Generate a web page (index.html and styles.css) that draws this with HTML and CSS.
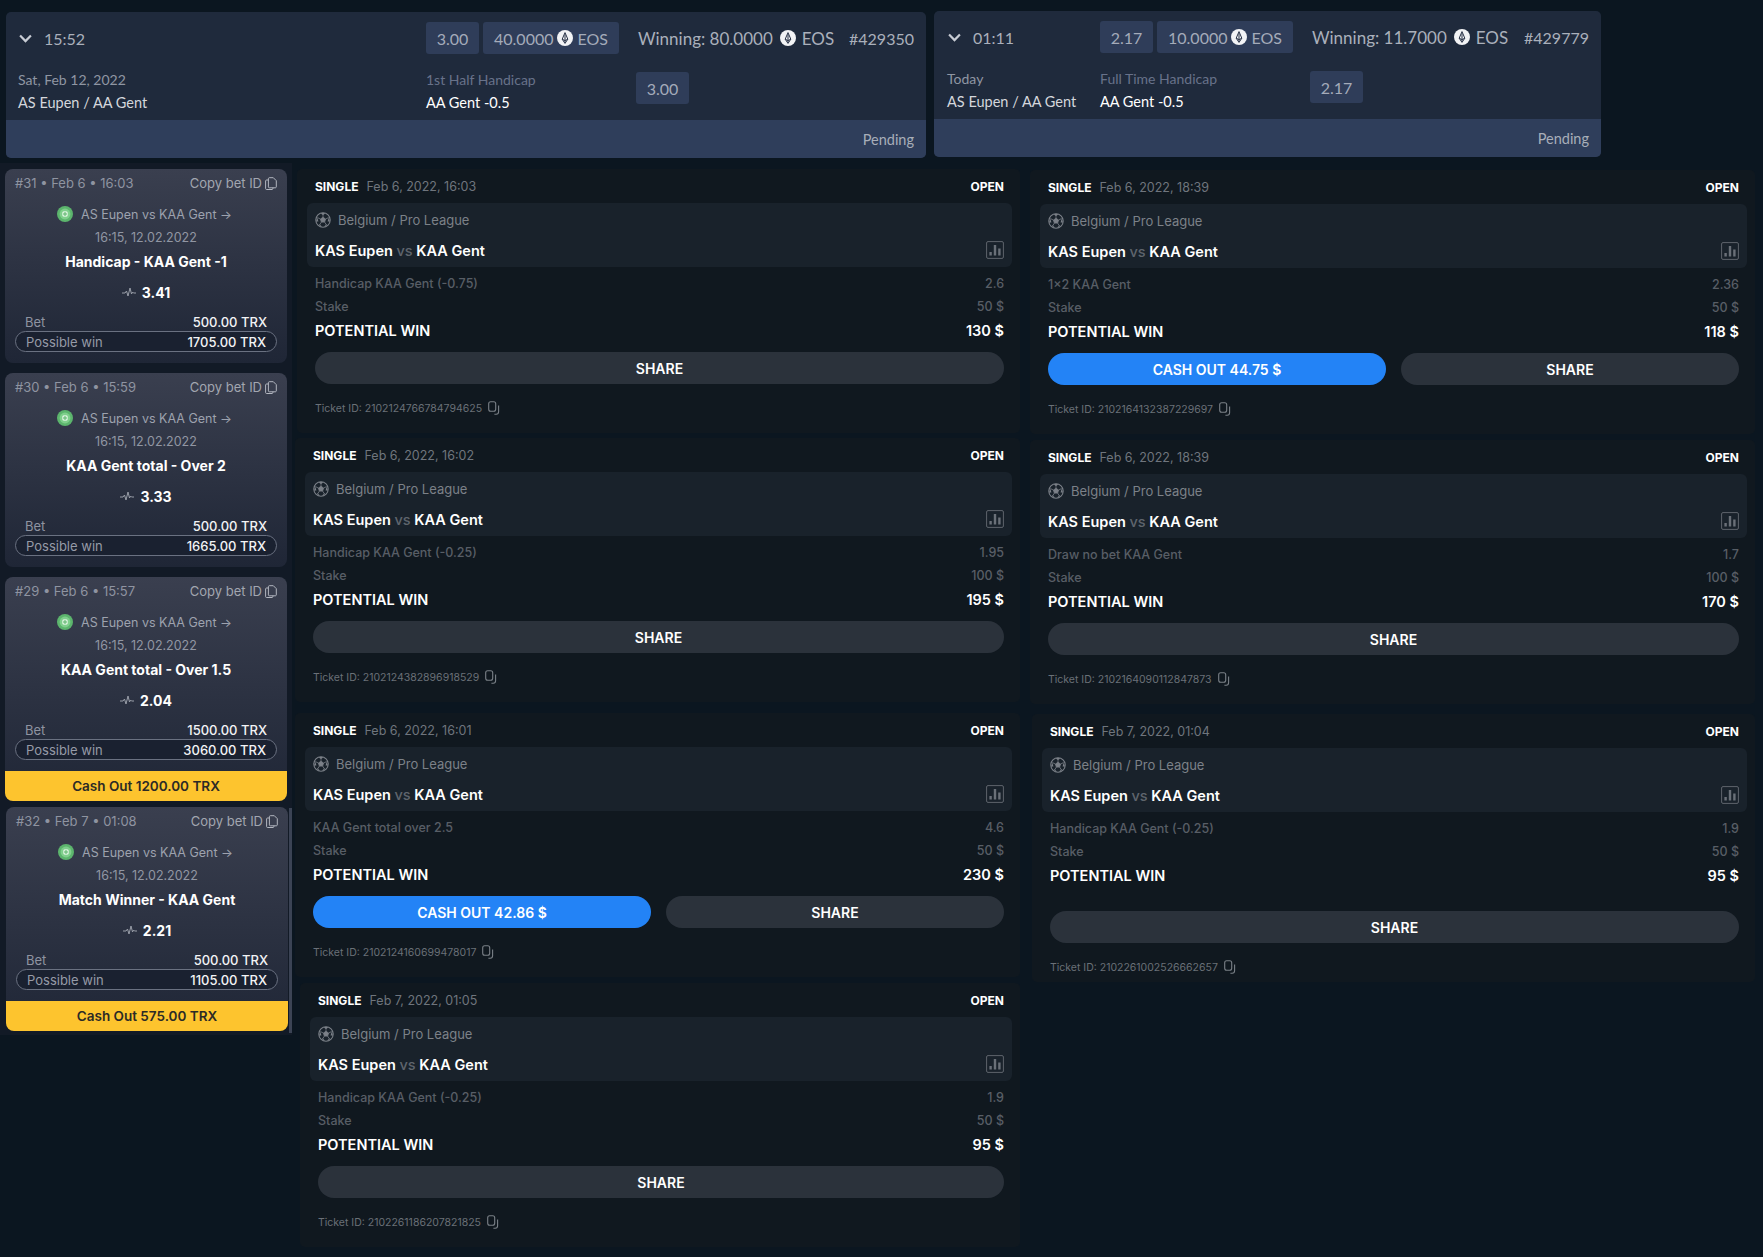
FILE: index.html
```html
<!DOCTYPE html>
<html lang="en">
<head>
<meta charset="utf-8">
<title>Bets</title>
<link rel="stylesheet" href="styles.css">
</head>
<body>
<svg class="defs" width="0" height="0" aria-hidden="true">
  <symbol id="i-eos" viewBox="0 0 16 16"><circle cx="8" cy="8" r="8" fill="#f2f3f5"/><path d="M8 2.6 5.2 9.2 8 13.4l2.8-4.2zM8 4.4v8M5.2 9.2 8 10.6l2.8-1.4" fill="none" stroke="#2a3448" stroke-width="1"/></symbol>
  <symbol id="i-ball" viewBox="0 0 16 16"><circle cx="8" cy="8" r="7.2" fill="none" stroke="#7b8088" stroke-width="1.1"/><path d="m8 5.2 2.6 1.9-1 3H6.4l-1-3zM8 1v2.4l0 1.8M10.6 7.1l3-1.6M9.6 10.1l1.9 2.9M6.4 10.1l-1.9 2.9M5.4 7.1l-3-1.6" fill="#7b8088" stroke="#7b8088" stroke-width=".8"/><path d="M5.6 1.4 8 3l2.4-1.6L8 .8zM1 9.4l1.4-3.6 1 3.6zM15 9.4l-1.4-3.6-1 3.6zM5 14.6l-1-2.6 3 2.4zM11 14.6l1-2.6-3 2.4z" fill="#7b8088"/></symbol>
  <symbol id="i-chart" viewBox="0 0 18 18"><rect x=".6" y=".6" width="16.8" height="16.8" rx="1.4" fill="none" stroke="#5e646c" stroke-width="1"/><path d="M3.4 11h2.4v3.6H3.4zM7.8 4h2.4v10.6H7.8zM12.2 7.4h2.4v7.2h-2.4z" fill="#6a7078"/></symbol>
  <symbol id="i-ticket-copy" viewBox="0 0 12 14"><rect x=".7" y=".7" width="7" height="9.6" rx="2" fill="none" stroke="#7a8087" stroke-width="1.1"/><path d="M10.6 4.4v6.4c0 1.3-.9 2.4-2.4 2.4H6.4" fill="none" stroke="#7a8087" stroke-width="1.1"/></symbol>
  <symbol id="i-copy" viewBox="0 0 12 13"><path d="M3.4 1.6c0-.5.4-.9.9-.9h4l3 3v6.2c0 .5-.4.9-.9.9H4.300c-.5 0-.9-.4-.9-.9z" fill="none" stroke="#b2b6bf" stroke-width="1"/><path d="M3.400 3H1.500c-.5 0-.9.4-.9.900v7.700c0 .5.4.9.9.9H7c.5 0 .9-.4.900-.9v-1" fill="none" stroke="#b2b6bf" stroke-width="1"/></symbol>
  <symbol id="i-pulse" viewBox="0 0 14 10"><path d="M0 6h3l1.500-2 1.500 5L8 1l1.500 6 1-2 1 1H14" fill="none" stroke="#9a9fa9" stroke-width="1"/></symbol>
  <symbol id="i-league" viewBox="0 0 16 16"><circle cx="8" cy="8" r="8" fill="#5cb56d"/><circle cx="8" cy="8" r="5.400" fill="#7fd08c"/><circle cx="8" cy="8" r="3" fill="#d9f2dc"/><path d="M8 5.800v4.400M5.800 8h4.400" stroke="#5cb56d" stroke-width="1"/></symbol>
</svg>

<div class="top-row">
  <section class="bet bet-a">
    <div class="bet-line bet-head">
      <div class="bet-first">
        <svg class="chev" viewBox="0 0 12 8"><path d="M1 1.200 6 6.400l5-5.200" fill="none" stroke="#c8ccd4" stroke-width="2"/></svg>
        <span class="bet-time">15:52</span>
      </div>
      <span class="chip chip-odds">3.00</span>
      <span class="chip chip-amount">40.0000 <svg class="eos"><use href="#i-eos"/></svg> EOS</span>
      <span class="winning">Winning: 80.0000 <svg class="eos eos-gap"><use href="#i-eos"/></svg> EOS</span>
      <span class="bet-id">#429350</span>
    </div>
    <div class="bet-line bet-body">
      <div class="bet-first">
        <div class="muted">Sat, Feb 12, 2022</div>
        <div class="strong">AS Eupen / AA Gent</div>
      </div>
      <div class="bet-market">
        <div class="muted dim">1st Half Handicap</div>
        <div class="strong bright">AA Gent -0.5</div>
      </div>
      <span class="chip chip-odds">3.00</span>
    </div>
    <div class="bet-foot">Pending</div>
  </section>
  <section class="bet bet-b">
    <div class="bet-line bet-head">
      <div class="bet-first">
        <svg class="chev" viewBox="0 0 12 8"><path d="M1 1.200 6 6.400l5-5.200" fill="none" stroke="#c8ccd4" stroke-width="2"/></svg>
        <span class="bet-time">01:11</span>
      </div>
      <span class="chip chip-odds">2.17</span>
      <span class="chip chip-amount">10.0000 <svg class="eos"><use href="#i-eos"/></svg> EOS</span>
      <span class="winning">Winning: 11.7000 <svg class="eos eos-gap"><use href="#i-eos"/></svg> EOS</span>
      <span class="bet-id">#429779</span>
    </div>
    <div class="bet-line bet-body">
      <div class="bet-first">
        <div class="muted">Today</div>
        <div class="strong">AS Eupen / AA Gent</div>
      </div>
      <div class="bet-market">
        <div class="muted dim">Full Time Handicap</div>
        <div class="strong bright">AA Gent -0.5</div>
      </div>
      <span class="chip chip-odds">2.17</span>
    </div>
    <div class="bet-foot">Pending</div>
  </section>
</div>

<div class="board">
  <aside class="side">
    <article class="slip">
      <div class="slip-main">
        <div class="slip-head"><span>#31 • Feb 6 • 16:03</span><span class="slip-copy">Copy bet ID <svg class="copy"><use href="#i-copy"/></svg></span></div>
        <div class="slip-match"><svg class="league"><use href="#i-league"/></svg>AS Eupen vs KAA Gent →</div>
        <div class="slip-date">16:15, 12.02.2022</div>
        <div class="slip-title">Handicap - KAA Gent -1</div>
        <div class="slip-odds"><svg class="pulse"><use href="#i-pulse"/></svg>3.41</div>
        <div class="slip-bet"><span>Bet</span><b>500.00 TRX</b></div>
        <div class="slip-win"><span>Possible win</span><b>1705.00 TRX</b></div>
      </div>
    </article>
    <article class="slip">
      <div class="slip-main">
        <div class="slip-head"><span>#30 • Feb 6 • 15:59</span><span class="slip-copy">Copy bet ID <svg class="copy"><use href="#i-copy"/></svg></span></div>
        <div class="slip-match"><svg class="league"><use href="#i-league"/></svg>AS Eupen vs KAA Gent →</div>
        <div class="slip-date">16:15, 12.02.2022</div>
        <div class="slip-title">KAA Gent total - Over 2</div>
        <div class="slip-odds"><svg class="pulse"><use href="#i-pulse"/></svg>3.33</div>
        <div class="slip-bet"><span>Bet</span><b>500.00 TRX</b></div>
        <div class="slip-win"><span>Possible win</span><b>1665.00 TRX</b></div>
      </div>
    </article>
    <article class="slip">
      <div class="slip-main">
        <div class="slip-head"><span>#29 • Feb 6 • 15:57</span><span class="slip-copy">Copy bet ID <svg class="copy"><use href="#i-copy"/></svg></span></div>
        <div class="slip-match"><svg class="league"><use href="#i-league"/></svg>AS Eupen vs KAA Gent →</div>
        <div class="slip-date">16:15, 12.02.2022</div>
        <div class="slip-title">KAA Gent total - Over 1.5</div>
        <div class="slip-odds"><svg class="pulse"><use href="#i-pulse"/></svg>2.04</div>
        <div class="slip-bet"><span>Bet</span><b>1500.00 TRX</b></div>
        <div class="slip-win"><span>Possible win</span><b>3060.00 TRX</b></div>
      </div>
      <div class="slip-cash">Cash Out 1200.00 TRX</div>
    </article>
    <article class="slip slip-last">
      <div class="slip-main">
        <div class="slip-head"><span>#32 • Feb 7 • 01:08</span><span class="slip-copy">Copy bet ID <svg class="copy"><use href="#i-copy"/></svg></span></div>
        <div class="slip-match"><svg class="league"><use href="#i-league"/></svg>AS Eupen vs KAA Gent →</div>
        <div class="slip-date">16:15, 12.02.2022</div>
        <div class="slip-title">Match Winner - KAA Gent</div>
        <div class="slip-odds"><svg class="pulse"><use href="#i-pulse"/></svg>2.21</div>
        <div class="slip-bet"><span>Bet</span><b>500.00 TRX</b></div>
        <div class="slip-win"><span>Possible win</span><b>1105.00 TRX</b></div>
      </div>
      <div class="slip-cash">Cash Out 575.00 TRX</div>
    </article>
    <div class="scrollbar"></div>
  </aside>

  <div class="col col-mid">
    <article class="ticket">
      <div class="t-head"><div><b>SINGLE</b><span>Feb 6, 2022, 16:03</span></div><b>OPEN</b></div>
      <div class="t-event">
        <div class="t-league"><svg class="ball"><use href="#i-ball"/></svg>Belgium / Pro League</div>
        <div class="t-teams"><div>KAS Eupen <span>vs</span> KAA Gent</div><svg class="chart"><use href="#i-chart"/></svg></div>
      </div>
      <div class="t-row t-first"><span>Handicap KAA Gent (-0.75)</span><span>2.6</span></div>
      <div class="t-row"><span>Stake</span><span>50 $</span></div>
      <div class="t-win"><span>POTENTIAL WIN</span><span>130 $</span></div>
      <div class="t-actions"><button class="btn">SHARE</button></div>
      <div class="t-id">Ticket ID: 2102124766784794625 <svg class="tcopy"><use href="#i-ticket-copy"/></svg></div>
    </article>
    <article class="ticket m2">
      <div class="t-head"><div><b>SINGLE</b><span>Feb 6, 2022, 16:02</span></div><b>OPEN</b></div>
      <div class="t-event">
        <div class="t-league"><svg class="ball"><use href="#i-ball"/></svg>Belgium / Pro League</div>
        <div class="t-teams"><div>KAS Eupen <span>vs</span> KAA Gent</div><svg class="chart"><use href="#i-chart"/></svg></div>
      </div>
      <div class="t-row t-first"><span>Handicap KAA Gent (-0.25)</span><span>1.95</span></div>
      <div class="t-row"><span>Stake</span><span>100 $</span></div>
      <div class="t-win"><span>POTENTIAL WIN</span><span>195 $</span></div>
      <div class="t-actions"><button class="btn">SHARE</button></div>
      <div class="t-id">Ticket ID: 2102124382896918529 <svg class="tcopy"><use href="#i-ticket-copy"/></svg></div>
    </article>
    <article class="ticket m3">
      <div class="t-head"><div><b>SINGLE</b><span>Feb 6, 2022, 16:01</span></div><b>OPEN</b></div>
      <div class="t-event">
        <div class="t-league"><svg class="ball"><use href="#i-ball"/></svg>Belgium / Pro League</div>
        <div class="t-teams"><div>KAS Eupen <span>vs</span> KAA Gent</div><svg class="chart"><use href="#i-chart"/></svg></div>
      </div>
      <div class="t-row t-first"><span>KAA Gent total over 2.5</span><span>4.6</span></div>
      <div class="t-row"><span>Stake</span><span>50 $</span></div>
      <div class="t-win"><span>POTENTIAL WIN</span><span>230 $</span></div>
      <div class="t-actions"><button class="btn btn-cash">CASH OUT 42.86 $</button><button class="btn">SHARE</button></div>
      <div class="t-id">Ticket ID: 2102124160699478017 <svg class="tcopy"><use href="#i-ticket-copy"/></svg></div>
    </article>
    <article class="ticket m4">
      <div class="t-head"><div><b>SINGLE</b><span>Feb 7, 2022, 01:05</span></div><b>OPEN</b></div>
      <div class="t-event">
        <div class="t-league"><svg class="ball"><use href="#i-ball"/></svg>Belgium / Pro League</div>
        <div class="t-teams"><div>KAS Eupen <span>vs</span> KAA Gent</div><svg class="chart"><use href="#i-chart"/></svg></div>
      </div>
      <div class="t-row t-first"><span>Handicap KAA Gent (-0.25)</span><span>1.9</span></div>
      <div class="t-row"><span>Stake</span><span>50 $</span></div>
      <div class="t-win"><span>POTENTIAL WIN</span><span>95 $</span></div>
      <div class="t-actions"><button class="btn">SHARE</button></div>
      <div class="t-id">Ticket ID: 2102261186207821825 <svg class="tcopy"><use href="#i-ticket-copy"/></svg></div>
    </article>
  </div>

  <div class="col col-right">
    <article class="ticket r1">
      <div class="t-head"><div><b>SINGLE</b><span>Feb 6, 2022, 18:39</span></div><b>OPEN</b></div>
      <div class="t-event">
        <div class="t-league"><svg class="ball"><use href="#i-ball"/></svg>Belgium / Pro League</div>
        <div class="t-teams"><div>KAS Eupen <span>vs</span> KAA Gent</div><svg class="chart"><use href="#i-chart"/></svg></div>
      </div>
      <div class="t-row t-first"><span>1x2 KAA Gent</span><span>2.36</span></div>
      <div class="t-row"><span>Stake</span><span>50 $</span></div>
      <div class="t-win"><span>POTENTIAL WIN</span><span>118 $</span></div>
      <div class="t-actions"><button class="btn btn-cash">CASH OUT 44.75 $</button><button class="btn">SHARE</button></div>
      <div class="t-id">Ticket ID: 2102164132387229697 <svg class="tcopy"><use href="#i-ticket-copy"/></svg></div>
    </article>
    <article class="ticket r2">
      <div class="t-head"><div><b>SINGLE</b><span>Feb 6, 2022, 18:39</span></div><b>OPEN</b></div>
      <div class="t-event">
        <div class="t-league"><svg class="ball"><use href="#i-ball"/></svg>Belgium / Pro League</div>
        <div class="t-teams"><div>KAS Eupen <span>vs</span> KAA Gent</div><svg class="chart"><use href="#i-chart"/></svg></div>
      </div>
      <div class="t-row t-first"><span>Draw no bet KAA Gent</span><span>1.7</span></div>
      <div class="t-row"><span>Stake</span><span>100 $</span></div>
      <div class="t-win"><span>POTENTIAL WIN</span><span>170 $</span></div>
      <div class="t-actions"><button class="btn">SHARE</button></div>
      <div class="t-id">Ticket ID: 2102164090112847873 <svg class="tcopy"><use href="#i-ticket-copy"/></svg></div>
    </article>
    <article class="ticket r3">
      <div class="t-head"><div><b>SINGLE</b><span>Feb 7, 2022, 01:04</span></div><b>OPEN</b></div>
      <div class="t-event">
        <div class="t-league"><svg class="ball"><use href="#i-ball"/></svg>Belgium / Pro League</div>
        <div class="t-teams"><div>KAS Eupen <span>vs</span> KAA Gent</div><svg class="chart"><use href="#i-chart"/></svg></div>
      </div>
      <div class="t-row t-first"><span>Handicap KAA Gent (-0.25)</span><span>1.9</span></div>
      <div class="t-row"><span>Stake</span><span>50 $</span></div>
      <div class="t-win"><span>POTENTIAL WIN</span><span>95 $</span></div>
      <div class="t-actions"><button class="btn">SHARE</button></div>
      <div class="t-id">Ticket ID: 2102261002526662657 <svg class="tcopy"><use href="#i-ticket-copy"/></svg></div>
    </article>
  </div>
</div>
</body>
</html>
```

FILE: styles.css
```css
* { box-sizing: border-box; }
html, body { margin: 0; padding: 0; }
body {
  width: 1763px;
  height: 1257px;
  overflow: hidden;
  background: #0b1620;
  color: #fff;
  font-family: "Inter", "Liberation Sans", sans-serif;
}
.defs { position: absolute; }

/* top bet cards */
.top-row { display: flex; align-items: flex-start; padding: 11px 0 0 6px; gap: 8px; }
.bet {
  display: flex; flex-direction: column;
  background: #1f2a3c;
  border-radius: 5px;
  overflow: hidden;
  font-family: "Lato", "Open Sans", sans-serif;
  font-size: 15px;
  color: #b2b8c3;
}
.bet-a { width: 920px; height: 146px; margin-top: 1px; --first: 408px; --market: 210px; }
.bet-b { width: 667px; height: 146px; --first: 154px; --market: 210px; }
.bet-line { display: flex; padding-left: 12px; }
.bet-head { height: 32px; margin-top: 10px; align-items: center; }
.bet-first { width: var(--first); flex: none; }
.bet-head .bet-first { display: flex; align-items: center; }
.bet-b .bet-first { padding-left: 1px; }
.chev { width: 13px; height: 9px; margin: 0 12px 0 1px; }
.bet-time { font-size: 16px; color: #aab0bb; }
.chip {
  display: inline-flex; align-items: center; justify-content: center;
  height: 32px;
  background: #2f3d59;
  border-radius: 3px;
  color: #a4abb9;
  font-size: 16px;
}
.chip-odds { width: 53px; }
.chip-amount { width: 136px; margin-left: 4px; gap: 4px; }
.eos { width: 16px; height: 16px; flex: none; }
.eos-gap { margin: 0 6px 0 7px; }
.winning { display: inline-flex; align-items: center; margin-left: 19px; font-size: 17px; color: #aab0bb; gap: 0; }
.bet-id { margin-left: auto; padding-right: 12px; font-size: 16px; color: #aab0bb; }
.bet-body { margin-top: 18px; height: 48px; }
.bet-market { width: var(--market); flex: none; }
.muted { font-size: 14px; line-height: 16px; color: #8f96a3; }
.dim { color: #68728a; }
.strong { font-size: 14.500px; line-height: 16px; margin-top: 7px; color: #d4d7dc; }
.bright { color: #fff; }
.bet-body .chip-odds { margin-top: 0; }
.bet-foot {
  margin-top: auto;
  height: 38px;
  display: flex; align-items: center; justify-content: flex-end;
  padding-right: 12px;
  background: #2f3e5b;
  font-size: 14.500px;
  color: #a8aeb9;
}

/* board */
.board { display: flex; align-items: flex-start; margin-top: 5px; }
.side {
  position: relative;
  flex: none;
  width: 292px;
  height: 872px;
  padding: 6px 0 0 5px;
  background: #121a26;
  display: flex; flex-direction: column; gap: 10px;
}
.scrollbar {
  position: absolute; right: 0; top: 645px; width: 3px; height: 225px;
  background: #3b4354;
}
.slip {
  width: 282px;
  border-radius: 8px;
  overflow: hidden;
  background: linear-gradient(180deg, #3a3f4f 0%, #1f2636 100%);
  color: #9da2ae;
  font-size: 13px;
}
.slip-last { margin: -4px 0 0 1px; }
.slip-main { height: 194px; padding: 0 10px; display: flex; flex-direction: column; }
.slip-head { display: flex; justify-content: space-between; align-items: center; height: 16px; margin-top: 6px; color: #8f94a1; }
.slip-copy { display: inline-flex; align-items: center; gap: 3px; color: #a2a6b0; }
.copy { width: 12px; height: 13px; }
.slip-match { display: flex; align-items: center; justify-content: center; gap: 8px; height: 16px; margin-top: 15px; font-size: 12.500px; color: #9da2ae; padding-right: 3px; }
.league { width: 16px; height: 16px; }
.slip-date { text-align: center; height: 16px; line-height: 16px; margin-top: 8px; font-size: 12.500px; color: #9196a3; }
.slip-title { text-align: center; height: 18px; line-height: 18px; margin-top: 7px; font-size: 14px; font-weight: 700; color: #fff; }
.slip-odds { display: flex; align-items: center; justify-content: center; gap: 6px; height: 18px; margin-top: 12px; font-size: 14px; font-weight: 700; color: #fff; }
.pulse { width: 14px; height: 10px; }
.slip-bet { display: flex; justify-content: space-between; height: 16px; line-height: 16px; margin-top: 13px; padding: 0 10px 0 10px; font-size: 13px; color: #8f94a1; }
.slip-win {
  display: flex; justify-content: space-between; align-items: center;
  height: 21px; margin-top: 1px; padding: 0 10px 0 10px;
  border: 1px solid #6a7181; border-radius: 11px;
  background: #1a2130;
  font-size: 13px; color: #969ba7;
}
.slip b { font-weight: 500; color: #f2f3f5; }
.slip-cash {
  height: 30px; line-height: 30px;
  text-align: center;
  background: #fdc42e;
  color: #2b2a26;
  font-size: 13.500px; font-weight: 600;
}

/* tickets */
.col { flex: none; display: flex; flex-direction: column; width: 725px; }
.col-mid { margin: 6px 0 0 3px; }
.col-right { margin: 7px 0 0 10px; }
.ticket {
  height: 264px;
  padding: 9px 8px 0 18px;
  background: #10181f;
  border-radius: 5px;
  font-size: 12.500px;
  color: #fff;
}
.m2 { margin: 5px 0 0 0; }
.m3 { margin: 11px 0 0 0; }
.m4 { margin: 6px 0 0 5px; }
.col-mid .ticket:first-child { margin-left: 2px; }
.r2 { margin: 6px 0 0 0; }
.r3 { margin: 10px 0 0 2px; height: 268px; }
.r3 .t-actions { margin-top: 24px; }
.t-head { display: flex; justify-content: space-between; align-items: center; height: 16px; padding-right: 8px; font-size: 12px; }
.t-head > div { display: flex; align-items: center; gap: 8px; }
.t-head b { font-weight: 700; }
.t-head span { font-size: 12.500px; color: #6f757d; }
.t-event {
  margin: 9px 0 0 -8px;
  height: 64px;
  padding: 8px 8px 0 8px;
  background: #19222b;
  border-radius: 6px;
}
.t-league { display: flex; align-items: center; gap: 7px; height: 18px; font-size: 13px; color: #7c8188; }
.ball { width: 16px; height: 16px; }
.t-teams { display: flex; justify-content: space-between; align-items: center; margin-top: 12px; height: 18px; font-size: 14.500px; font-weight: 600; }
.t-teams span { color: #5f656d; font-weight: 500; }
.chart { width: 18px; height: 18px; }
.t-row { display: flex; justify-content: space-between; align-items: center; height: 23px; padding-right: 8px; font-size: 12.500px; font-weight: 500; color: #585e66; }
.t-first { margin-top: 5px; }
.t-win { display: flex; justify-content: space-between; align-items: center; height: 24px; padding-right: 8px; font-size: 14.500px; font-weight: 600; }
.t-actions { display: flex; gap: 15px; margin: 10px 8px 0 0; margin-top: 10px; }
.btn {
  flex: 1 1 0;
  height: 32px;
  border: 0;
  border-radius: 16px;
  background: #2b323b;
  color: #fff;
  font: 600 14px "Inter", sans-serif;
}
.btn-cash { background: #2383f6; }
.t-id { display: flex; align-items: center; gap: 6px; margin-top: 16px; height: 16px; font-size: 10.500px; color: #6a7077; }
.tcopy { width: 12px; height: 14px; }
```
